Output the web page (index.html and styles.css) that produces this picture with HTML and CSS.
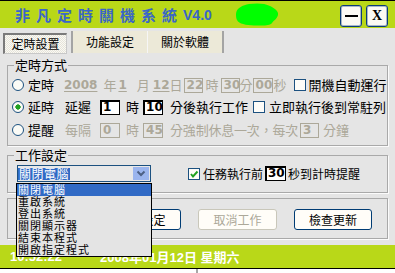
FILE: index.html
```html
<!DOCTYPE html>
<html lang="zh-Hant">
<head>
<meta charset="utf-8">
<link rel="stylesheet" href="styles.css">
</head>
<body>
<div class="app">
  <header class="titlebar">
    <h1 class="title">非凡定時關機系統</h1>
    <span class="ver">V4.0</span>
    <svg class="blob" viewBox="0 0 44 23" aria-hidden="true"><path d="M1 11 C1 5 8 2 14 1 C21 0 30 0 35 3 C39 5 44 8 43 12 C42 16 39 17 37 20 C35 23 28 22.5 22 22.5 C14 22.5 6 21.5 3 18.5 C1 16.5 1 13.5 1 11Z" fill="#00ff00"/></svg>
    <div class="winbtns">
      <div class="wbtn"><span class="dash"></span></div>
      <div class="wbtn close">X</div>
    </div>
  </header>

  <nav class="tabs">
    <div class="tab active">定時設置</div>
    <div class="tab t2">功能設定</div>
    <div class="tab t3">關於軟體</div>
  </nav>

  <fieldset class="grp g1">
    <legend>定時方式</legend>
    <div class="row">
      <span class="radio"></span>
      <span class="m4">定時</span>
      <span class="n u dis m10">2008</span>
      <span class="dis m6">年</span>
      <span class="n u dis m2">1</span>
      <span class="dis m10">月</span>
      <span class="n u dis m3">12</span>
      <span class="dis">日</span>
      <span class="box off w19 m1">22</span>
      <span class="dis m3">時</span>
      <span class="box off w19 m2">30</span>
      <span class="dis">分</span>
      <span class="box off w20">00</span>
      <span class="dis m1">秒</span>
      <span class="chk m7"></span>
      <span class="m3">開機自動運行</span>
    </div>
    <div class="row r2">
      <span class="radio on"></span>
      <span class="m4">延時</span>
      <span class="m11">延遲</span>
      <span class="box on w20 m9">1</span>
      <span class="m6">時</span>
      <span class="box on w20 m4">10</span>
      <span class="m7">分後執行工作</span>
      <span class="chk m5"></span>
      <span class="m4">立即執行後到常駐列</span>
    </div>
    <div class="row r3">
      <span class="radio"></span>
      <span class="m4">提醒</span>
      <span class="dis m11">每隔</span>
      <span class="box off w20 m9">0</span>
      <span class="dis m6">時</span>
      <span class="box off w20 m4">45</span>
      <span class="dis m7 narrow">分強制休息一次，每次</span>
      <span class="box off w19 m2">3</span>
      <span class="dis m4">分鐘</span>
    </div>
  </fieldset>

  <fieldset class="grp g2">
    <legend>工作設定</legend>
    <div class="row wrow">
      <div class="combo">
        <span class="sel">關閉電腦</span>
        <span class="arrow"><svg viewBox="0 0 16 13" width="16" height="13"><polyline points="4.5,4.5 8,8 11.5,4.5" fill="none" stroke="#4d6185" stroke-width="2"/></svg></span>
      </div>
      <span class="chk checked m37"><svg viewBox="0 0 10 10" width="10" height="10"><polyline points="2,5 4,7.5 8.5,2.5" fill="none" stroke="#21a121" stroke-width="2"/></svg></span>
      <span class="s12 m3">任務執行前</span>
      <span class="box on w21 m2">30</span>
      <span class="s12 m2">秒到計時提醒</span>
    </div>
  </fieldset>

  <fieldset class="grp g3">
    <div class="btnrow">
      <div class="btn">保存設定</div>
      <div class="btn dis">取消工作</div>
      <div class="btn">檢查更新</div>
    </div>
  </fieldset>

  <footer class="status">
    <span class="time">10:52:22</span>
    <span class="date">2008年01月12日 星期六</span>
  </footer>
  <div class="base"><span class="vline"></span></div>

  <ul class="list">
    <li class="on">關閉電腦</li>
    <li>重啟系統</li>
    <li>登出系統</li>
    <li>關閉顯示器</li>
    <li>結束本程式</li>
    <li>開啟指定程式</li>
  </ul>
</div>
</body>
</html>
```
FILE: styles.css
```css
* { box-sizing: border-box; }
html, body { margin: 0; padding: 0; }
body {
  width: 395px;
  height: 273px;
  overflow: hidden;
  background: #e5e5e5;
  font-family: "Noto Sans CJK TC", "Noto Sans CJK SC", sans-serif;
  font-size: 13px;
  color: #000;
}
.app {
  position: relative;
  width: 395px;
  height: 273px;
  display: flex;
  flex-direction: column;
}

/* title bar */
.titlebar {
  flex: none;
  height: 28px;
  background: #b9d818;
  border-top: 1px solid #000;
  display: flex;
  align-items: center;
  padding-left: 15px;
}
.title {
  margin: 0;
  font-size: 15px;
  font-weight: 700;
  letter-spacing: 6px;
  line-height: 18px;
  color: #3a66c8;
}
.ver {
  font-family: "Liberation Sans", sans-serif;
  font-weight: 700;
  font-size: 14px;
  color: #3a66c8;
}
.blob { margin-left: 23px; width: 44px; height: 23px; }
.winbtns {
  margin-left: auto;
  align-self: flex-start;
  margin-top: 4px;
  display: flex;
  gap: 4px;
  padding-right: 7px;
}
.wbtn {
  width: 22px;
  height: 22px;
  border: 1px solid #0b3c78;
  box-shadow: inset 0 0 0 1px rgba(11, 60, 120, .35);
  border-radius: 3px;
  background: #fcfaf4;
  display: flex;
  align-items: center;
  justify-content: center;
}
.dash { width: 13px; height: 2px; background: #000; }
.close {
  font-family: "Liberation Serif", serif;
  font-weight: 700;
  font-size: 14px;
  line-height: 14px;
}

/* tabs */
.tabs {
  flex: none;
  height: 28px;
  display: flex;
  align-items: flex-start;
  padding: 3px 0 0 3px;
  font-size: 12px;
}
.tab {
  height: 22px;
  width: 74px;
  background: #ece9d8;
  display: flex;
  align-items: center;
  justify-content: center;
  line-height: 14px;
}
.tab.active {
  margin-top: 2px;
  width: 64px;
  height: 21px;
  border-style: solid;
  border-width: 2px 1px 1px 2px;
  border-color: #7a7a7a #c8c8c8 #c8c8c8 #7a7a7a;
  background: repeating-conic-gradient(#faf9f4 0 25%, #e6e4da 0 50%) 0 0 / 2px 2px;
}
.tab.t2 {
  margin-left: 4px;
  width: 77px;
  border-left: 2px solid #a4a4a4;
  border-right: 1px solid #f6f6f6;
}
.tab.t3 {
  width: 76px;
  border-right: 2px solid #a4a4a4;
}

/* group boxes */
.grp {
  margin: 0 7px;
  padding: 0;
  min-width: 0;
  border: 1px solid #a9a9a9;
  box-shadow: 1px 1px 0 #fbfbfb;
}
.grp legend {
  margin-left: 6px;
  padding: 0 1px;
  font-size: 13px;
  line-height: 14px;
}
.g1 { margin-top: 2px; padding: 5px 0 7px; }
.g2 { margin-top: 2px; padding: 3px 0 10px; }
.g3 { margin-top: 5px; padding: 10px 0 8px; }

.row {
  display: flex;
  align-items: center;
  height: 16px;
  line-height: 16px;
  padding-left: 4px;
  white-space: nowrap;
}
.r2 { margin-top: 6px; }
.r3 { margin-top: 7px; }
.wrow { height: 17px; padding-left: 9px; }

.dis { color: #aca899; }
.n {
  font-family: "DejaVu Sans", sans-serif;
  font-weight: 700;
  font-size: 12px;
}
.u { text-decoration: underline; text-underline-offset: 2px; }
.s12 { font-size: 12px; }
.narrow { letter-spacing: -0.2px; }

.box {
  flex: none;
  height: 15px;
  border: 1px solid;
  padding-left: 2px;
  font-family: "DejaVu Sans", sans-serif;
  font-weight: 700;
  font-size: 12px;
  line-height: 13px;
}
.box.on { border-color: #000; box-shadow: inset 1px 1px 0 #000; background: #fff; color: #000; }
.box.off { border-color: #aca899; color: #aca899; }
.w19 { width: 19px; }
.w20 { width: 20px; }
.w21 { width: 21px; }

.radio {
  flex: none;
  width: 12px;
  height: 12px;
  border-radius: 50%;
  border: 1px solid #1c5180;
  background: #fbfbf6;
}
.radio.on { background: radial-gradient(circle, #21a121 0 2.4px, #fbfbf6 2.9px); }
.chk {
  flex: none;
  width: 12px;
  height: 12px;
  border: 1px solid #1c5180;
  background: #fdfcf8;
  display: flex;
  align-items: center;
  justify-content: center;
}

.m1 { margin-left: 1px; }
.m2 { margin-left: 2px; }
.m3 { margin-left: 3px; }
.m4 { margin-left: 4px; }
.m5 { margin-left: 5px; }
.m6 { margin-left: 6px; }
.m7 { margin-left: 7px; }
.m9 { margin-left: 9px; }
.m10 { margin-left: 10px; }
.m11 { margin-left: 11px; }
.m37 { margin-left: 37px; }

/* combo */
.combo {
  flex: none;
  width: 134px;
  height: 17px;
  border: 1px solid #1c5180;
  background: #e8e8e8;
  display: flex;
  align-items: center;
  padding: 0 1px 0 0;
}
.sel {
  background: #316ac5;
  color: #fff;
  font-size: 12px;
  line-height: 12px;
  padding: 0 1px;
  letter-spacing: 0.5px;
}
.arrow {
  margin-left: auto;
  width: 16px;
  height: 13px;
  background: #9bb5ee;
  display: flex;
}

/* buttons */
.btnrow {
  display: flex;
  gap: 17px;
  padding-left: 94px;
}
.btn {
  width: 79px;
  height: 21px;
  border: 1px solid #003c74;
  border-radius: 3px;
  background: #fffdf8;
  font-size: 12px;
  line-height: 14px;
  display: flex;
  align-items: center;
  justify-content: center;
}
.btn:last-child { width: 78px; }
.btn.dis { border-color: #c9c7ba; color: #aca899; }

/* status */
.status {
  flex: none;
  margin-top: 6px;
  height: 24px;
  background: #b9d818;
  border-bottom: 1px solid #000;
  display: flex;
  align-items: center;
  padding-left: 10px;
  color: #fff;
  font-family: "Liberation Sans", "Noto Sans CJK TC", sans-serif;
  font-weight: 700;
  font-size: 13px;
  white-space: pre;
}
.date { margin-left: 38px; }
.base {
  flex: 1;
  background: #fff;
  display: flex;
}
.vline { margin-left: 196px; width: 2px; background: #a8a8a8; }

/* dropdown list */
.list {
  position: absolute;
  left: 16px;
  top: 183px;
  width: 136px;
  height: 74px;
  margin: 0;
  padding: 0;
  list-style: none;
  border: 1px solid #000;
  background: #e4e4e4;
  font-family: "Liberation Sans", "Noto Sans CJK TC", sans-serif;
  font-size: 11px;
  letter-spacing: 1px;
  line-height: 12px;
}
.list li { height: 12px; padding-left: 1px; white-space: nowrap; }
.list li.on { background: #316ac5; color: #fff; }
```
